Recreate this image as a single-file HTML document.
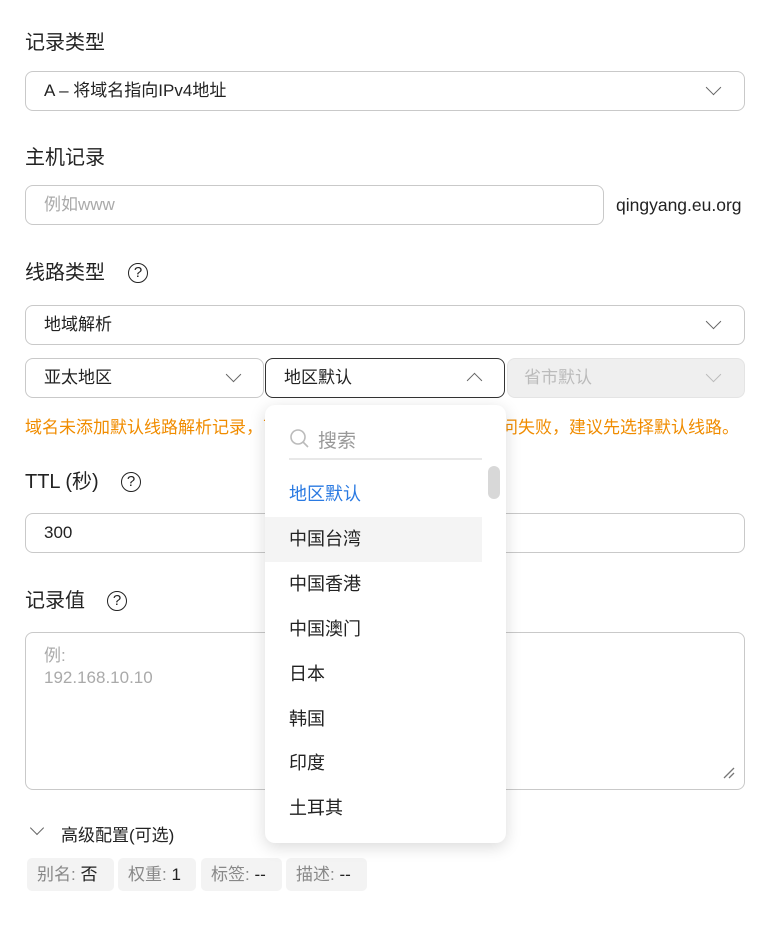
<!DOCTYPE html><html><head><meta charset="utf-8"><style>
body{margin:0;width:775px;height:937px;background:#fff;position:relative;font-family:"Liberation Sans","Noto Sans CJK SC",sans-serif;color:#222;overflow:hidden}
.a{position:absolute}
.lbl{font-size:20px;line-height:24px}
.box{position:absolute;border:1px solid #c9c9c9;border-radius:8px;box-sizing:border-box;font-size:17px;line-height:38px;padding-left:18px}
.chev{position:absolute;width:10px;height:10px;border-right:1.6px solid #666;border-bottom:1.6px solid #666;transform:rotate(45deg)}
.q{position:absolute;width:18px;height:18px;border:1.6px solid #222;border-radius:50%;font-size:15px;line-height:18px;text-align:center}
.tag{position:absolute;top:858px;height:33px;background:#f3f3f3;border-radius:5px;font-size:17px;line-height:33px;color:#888;padding:0 10px;box-sizing:border-box;white-space:nowrap}
.tag b{color:#222;font-weight:normal}
.it{position:absolute;left:289px;font-size:18px;line-height:24px}
</style></head><body>
<div class="a lbl" style="left:25px;top:31px">记录类型</div>
<div class="box" style="left:25px;top:71px;width:720px;height:40px">A – 将域名指向IPv4地址</div>
<div class="chev" style="left:708px;top:82px"></div>

<div class="a lbl" style="left:25px;top:146px">主机记录</div>
<div class="box" style="left:25px;top:185px;width:579px;height:40px;color:#aaa">例如www</div>
<div class="a" style="left:616px;top:195px;font-size:17.5px">qingyang.eu.org</div>

<div class="a lbl" style="left:25px;top:261px">线路类型</div>
<div class="q" style="left:128px;top:263px">?</div>
<div class="box" style="left:25px;top:305px;width:720px;height:40px">地域解析</div>
<div class="chev" style="left:708px;top:316px"></div>

<div class="box" style="left:25px;top:358px;width:239px;height:40px">亚太地区</div>
<div class="chev" style="left:228px;top:369px"></div>
<div class="box" style="left:265px;top:358px;width:240px;height:40px;border-color:#333">地区默认</div>
<div class="chev" style="left:469px;top:375px;transform:rotate(225deg)"></div>
<div class="box" style="left:507px;top:358px;width:238px;height:40px;background:#efefef;border-color:#e4e4e4;color:#bbb;padding-left:16px">省市默认</div>
<div class="chev" style="left:708px;top:369px;border-color:#bbb"></div>

<div class="a" style="left:25px;top:413px;font-size:17px;color:#f08c00;white-space:nowrap;letter-spacing:0">域名未添加默认线路解析记录，可能会导致部分地区用户解析访问失败，建议先选择默认线路。</div>

<div class="a lbl" style="left:25px;top:470px">TTL (秒)</div>
<div class="q" style="left:121px;top:472px">?</div>
<div class="box" style="left:25px;top:513px;width:720px;height:40px">300</div>

<div class="a lbl" style="left:25px;top:589px">记录值</div>
<div class="q" style="left:107px;top:591px">?</div>
<div class="box" style="left:25px;top:632px;width:720px;height:158px;line-height:22px;padding-top:12px;color:#aaa;font-size:17px">例:<br>192.168.10.10</div>
<svg class="a" style="left:722px;top:766px" width="14" height="14"><path d="M2 12L12 2M7 12L12 7" stroke="#777" stroke-width="1.3"/></svg>

<div class="chev" style="left:32px;top:823px;width:9px;height:9px;border-width:1.3px"></div>
<div class="a" style="left:61px;top:821px;font-size:17px">高级配置(可选)</div>
<div class="tag" style="left:27px;width:87px">别名: <b>否</b></div>
<div class="tag" style="left:118px;width:78px">权重: <b>1</b></div>
<div class="tag" style="left:201px;width:81px">标签: <b>--</b></div>
<div class="tag" style="left:286px;width:81px">描述: <b>--</b></div>

<div class="a" style="left:265px;top:405px;width:241px;height:438px;background:#fff;border-radius:10px;box-shadow:0 4px 16px rgba(0,0,0,.15)"></div>
<svg class="a" style="left:289px;top:428px" width="22" height="22"><circle cx="9" cy="9" r="7" stroke="#bbb" stroke-width="1.6" fill="none"/><path d="M14 14L19 19" stroke="#bbb" stroke-width="1.6"/></svg>
<div class="a" style="left:318px;top:426px;font-size:19px;color:#999">搜索</div>
<div class="a" style="left:289px;top:458px;width:193px;height:2px;background:#e8e8e8"></div>
<div class="a" style="left:488px;top:466px;width:12px;height:33px;background:#d8d8d8;border-radius:6px"></div>
<div class="it" style="top:482px;color:#2a7ae2">地区默认</div>
<div class="a" style="left:265px;top:517px;width:217px;height:45px;background:#f4f4f4"></div>
<div class="it" style="top:527px">中国台湾</div>
<div class="it" style="top:572px">中国香港</div>
<div class="it" style="top:617px">中国澳门</div>
<div class="it" style="top:662px">日本</div>
<div class="it" style="top:707px">韩国</div>
<div class="it" style="top:751px">印度</div>
<div class="it" style="top:796px">土耳其</div>
</body></html>
